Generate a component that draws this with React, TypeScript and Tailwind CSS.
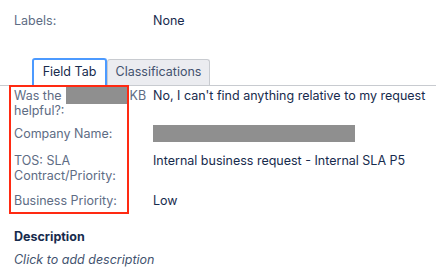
import React from 'react';

const rows = [
  { label: 'kb', value: "No, I can't find anything relative to my request" },
  { label: 'Company Name:', value: null },
  { label: 'TOS: SLA Contract/Priority:', value: 'Internal business request - Internal SLA P5' },
  { label: 'Business Priority:', value: 'Low' },
];

const App = () => {
  return (
    <div className="relative w-[436px] h-[272px] overflow-hidden bg-white text-[12.5px] text-[#172b4d] font-['Inter','Liberation_Sans',sans-serif]">
      {/* Labels */}
      <div className="flex items-center pt-[13px] pl-[14px] h-[30px]">
        <div className="w-[139px] text-[#5e6c84]">Labels:</div>
        <div>None</div>
      </div>

      {/* Tabs */}
      <div className="flex items-end mt-[29px] h-[27px] border-b border-[#c8cbd0]">
        <div className="ml-[32px] w-[75px] h-[27px] rounded-t-[3px] border-2 border-b-0 border-[#4c9aff] bg-white flex items-center justify-center text-[#172b4d]">
          Field Tab
        </div>
        <div className="w-[103px] h-[26px] rounded-t-[3px] border border-b-0 border-[#c8cbd0] bg-[#ebecf0] flex items-center justify-center text-[#42526e]">
          Classifications
        </div>
      </div>

      {/* Fields */}
      <div className="pl-[14px] flex flex-col leading-[15px]">
        <div className="flex mt-[2px]">
          <div className="w-[139px] text-[#5e6c84]">
            <div className="flex items-center h-[15px]">
              <span>Was the</span>
              <span className="ml-[4px] w-[61px] h-[17px] bg-[#8f8f8f]"></span>
              <span className="ml-[3px]">KB</span>
            </div>
            <div>helpful?:</div>
          </div>
          <div>{rows[0].value}</div>
        </div>
        <div className="flex items-center h-[17px] mt-[7px]">
          <div className="w-[139px] text-[#5e6c84]">Company Name:</div>
          <div className="w-[202px] h-[17px] bg-[#8f8f8f]"></div>
        </div>
        <div className="flex mt-[11px]">
          <div className="w-[139px] text-[#5e6c84]">
            <div>TOS: SLA</div>
            <div>Contract/Priority:</div>
          </div>
          <div>{rows[2].value}</div>
        </div>
        <div className="flex mt-[10px]">
          <div className="w-[139px] text-[#5e6c84]">Business Priority:</div>
          <div>{rows[3].value}</div>
        </div>
      </div>

      {/* Description */}
      <div className="pl-[14px] mt-[21px] leading-[15px]">
        <div className="font-bold text-[#172b4d]">Description</div>
        <div className="mt-[8px] italic text-[#42526e]">Click to add description</div>
      </div>

      {/* annotation */}
      <div className="absolute left-[9px] top-[85px] w-[120px] h-[129px] border-2 border-[#ff2a12] pointer-events-none"></div>
    </div>
  );
};

export default App;
